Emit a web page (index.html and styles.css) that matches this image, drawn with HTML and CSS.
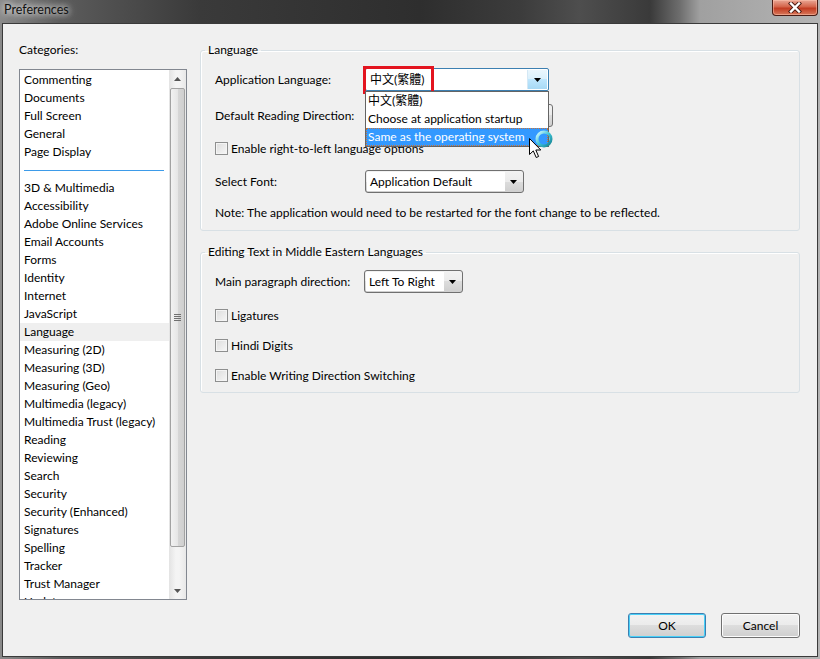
FILE: index.html
```html
<!DOCTYPE html>
<html lang="en">
  <head>
    <meta charset="UTF-8" />
    <title>Preferences</title>
    <link rel="stylesheet" href="styles.css">
  </head>
  <body>
    <div class="titlebar">
      <span class="title">Preferences</span>
      <div class="close-btn">
        <svg width="18" height="11" viewBox="0 0 18 11">
          <path d="M5 1.5 L13 9.5 M13 1.5 L5 9.5" stroke="#4a1a12" stroke-width="4.2" stroke-linecap="square" />
          <path d="M5 1.5 L13 9.5 M13 1.5 L5 9.5" stroke="#ffffff" stroke-width="2.4" stroke-linecap="square" />
        </svg>
      </div>
    </div>

    <div class="window">
      <div class="content">
        <!-- left: categories -->
        <div class="categories">
          <div class="cat-label">Categories:</div>
          <div class="listbox">
            <ul class="items">
              <li>Commenting</li>
              <li>Documents</li>
              <li>Full Screen</li>
              <li>General</li>
              <li>Page Display</li>
              <li class="sep"><span></span></li>
              <li>3D &amp; Multimedia</li>
              <li>Accessibility</li>
              <li>Adobe Online Services</li>
              <li>Email Accounts</li>
              <li>Forms</li>
              <li>Identity</li>
              <li>Internet</li>
              <li>JavaScript</li>
              <li class="selected">Language</li>
              <li>Measuring (2D)</li>
              <li>Measuring (3D)</li>
              <li>Measuring (Geo)</li>
              <li>Multimedia (legacy)</li>
              <li>Multimedia Trust (legacy)</li>
              <li>Reading</li>
              <li>Reviewing</li>
              <li>Search</li>
              <li>Security</li>
              <li>Security (Enhanced)</li>
              <li>Signatures</li>
              <li>Spelling</li>
              <li>Tracker</li>
              <li>Trust Manager</li>
              <li>Updater</li>
            </ul>
            <div class="scrollbar">
              <div class="sb-arrow">
                <svg width="7" height="4" viewBox="0 0 7 4"><path d="M0 4 L3.5 0 L7 4 Z" fill="#555" /></svg>
              </div>
              <div class="sb-track">
                <div class="sb-thumb">
                  <div class="grip"><span></span><span></span><span></span><span></span></div>
                </div>
              </div>
              <div class="sb-arrow">
                <svg width="7" height="4" viewBox="0 0 7 4"><path d="M0 0 L3.5 4 L7 0 Z" fill="#555" /></svg>
              </div>
            </div>
          </div>
        </div>

        <!-- right: settings -->
        <div class="settings">
          <fieldset class="group">
            <legend>Language</legend>
            <div class="group-body">
              <div class="row">
                <span class="label">Application Language:</span>
                <div class="combo open">
                  <div class="value cjk">中文(繁體)</div>
                  <div class="drop-btn">
                    <svg width="7" height="4" viewBox="0 0 7 4"><path d="M0 0 L3.5 4 L7 0 Z" fill="#000" /></svg>
                  </div>
                  <div class="highlight"></div>
                  <ul class="popup">
                    <li class="cjk">中文(繁體)</li>
                    <li>Choose at application startup</li>
                    <li class="active">Same as the operating system</li>
                  </ul>
                  <svg class="cursor" width="30" height="34" viewBox="0 0 30 34">
                    <defs>
                      <linearGradient id="ring" x1="0" y1="0" x2="1" y2="1">
                        <stop offset="0" stop-color="#d8fbff" />
                        <stop offset="0.5" stop-color="#3ec3d6" />
                        <stop offset="1" stop-color="#13808f" />
                      </linearGradient>
                    </defs>
                    <circle cx="19" cy="11" r="7" fill="none" stroke="url(#ring)" stroke-width="3" />
                    <path d="M4.5 10.5 L4.5 26.5 L8.3 22.9 L11.2 29.5 L13.6 28.5 L10.8 22 L15.8 22 Z" fill="#fff" stroke="#000" stroke-width="1" stroke-linejoin="round" />
                  </svg>
                </div>
              </div>
              <div class="row gap13">
                <span class="label">Default Reading Direction:</span>
                <div class="select wide">
                  <div class="value"></div>
                  <div class="arrow">
                    <svg width="7" height="4" viewBox="0 0 7 4"><path d="M0 0 L3.5 4 L7 0 Z" fill="#000" /></svg>
                  </div>
                </div>
              </div>
              <label class="check gap12"><span class="box"></span>Enable right-to-left language options</label>
              <div class="row gap13">
                <span class="label">Select Font:</span>
                <div class="select font">
                  <div class="value">Application Default</div>
                  <div class="arrow">
                    <svg width="7" height="4" viewBox="0 0 7 4"><path d="M0 0 L3.5 4 L7 0 Z" fill="#000" /></svg>
                  </div>
                </div>
              </div>
              <p class="note">Note: The application would need to be restarted for the font change to be reflected.</p>
            </div>
          </fieldset>

          <fieldset class="group second">
            <legend>Editing Text in Middle Eastern Languages</legend>
            <div class="group-body">
              <div class="row">
                <span class="label">Main paragraph direction:</span>
                <div class="select dir">
                  <div class="value">Left To Right</div>
                  <div class="arrow">
                    <svg width="7" height="4" viewBox="0 0 7 4"><path d="M0 0 L3.5 4 L7 0 Z" fill="#000" /></svg>
                  </div>
                </div>
              </div>
              <label class="check gap13"><span class="box"></span>Ligatures</label>
              <label class="check gap12"><span class="box"></span>Hindi Digits</label>
              <label class="check gap12"><span class="box"></span>Enable Writing Direction Switching</label>
            </div>
          </fieldset>
        </div>
      </div>

      <div class="footer">
        <button class="btn default">OK</button>
        <button class="btn cancel">Cancel</button>
      </div>
    </div>
  </body>
</html>
```

FILE: styles.css
```css
* {
  box-sizing: border-box;
}
body {
  margin: 0;
  width: 820px;
  height: 659px;
  overflow: hidden;
  font-family: Lato, "Noto Sans", sans-serif;
  font-size: 12px;
  color: #000;
  background: linear-gradient(90deg, #8a8a8a 0px, #5c5c5c 60px, #3a3a3a 200px, #2e2e2e 420px, #3c3c3c 520px, #4e4e4e 580px, #3a3a3a 650px, #6e6e6e 680px, #a0a0a0 700px, #b4b4b4 820px);
}
.cjk {
  font-family: Lato, "Noto Sans CJK TC", sans-serif;
}
.titlebar {
  display: flex;
  align-items: flex-start;
  height: 23px;
}
.title {
  padding: 2px 0 0 4px;
  line-height: 16px;
  font-size: 12.5px;
  color: #111;
  text-shadow: 0 0 6px #fff, 0 0 10px rgba(255, 255, 255, 0.8);
}
.close-btn {
  margin-left: auto;
  margin-right: 2px;
  width: 46px;
  height: 16px;
  display: flex;
  align-items: center;
  justify-content: center;
  border: 1px solid #4a1c14;
  border-top: none;
  border-radius: 0 0 4px 4px;
  background: linear-gradient(#e9a795, #d4644a 45%, #c23c22 55%, #d8785a);
  box-shadow: inset 0 0 0 1px rgba(255, 200, 180, 0.5);
}
.window {
  margin: 0 2px;
  height: 634px;
  border: 1px solid #3a3a3a;
  background-color: #f0f0f0;
  padding: 18px 16px 0 16px;
}
.content {
  display: grid;
  grid-template-columns: 168px 600px;
  column-gap: 13px;
  height: 558px;
}
.cat-label {
  line-height: 16px;
  margin-bottom: 11px;
}
.listbox {
  display: flex;
  height: 531px;
  border: 1px solid #828790;
  background-color: #fff;
  overflow: hidden;
}
.items {
  flex: 1;
  list-style: none;
  margin: 0;
  padding: 1px 0 0 0;
  overflow: hidden;
}
.items li {
  height: 18px;
  line-height: 18px;
  padding-left: 4px;
  white-space: nowrap;
}
.items li.selected {
  background-color: #efefef;
}
.items li.sep {
  display: flex;
  align-items: center;
}
.items li.sep span {
  display: block;
  width: 140px;
  height: 1px;
  background-color: #3d9be9;
}
.scrollbar {
  width: 17px;
  display: flex;
  flex-direction: column;
  background: linear-gradient(90deg, #e3e3e3, #f4f4f4 40%, #f4f4f4 60%, #e8e8e8);
}
.sb-arrow {
  height: 17px;
  display: flex;
  align-items: center;
  justify-content: center;
}
.sb-track {
  flex: 1;
  padding: 1px 0 0 0;
}
.sb-thumb {
  height: 459px;
  margin: 0 1px;
  border: 1px solid #a2a2a2;
  border-radius: 2px;
  background: linear-gradient(90deg, #f2f2f2, #e6e6e6 50%, #d6d6d6 55%, #cfcfcf);
  display: flex;
  align-items: center;
  justify-content: center;
}
.grip {
  display: flex;
  flex-direction: column;
  gap: 1px;
}
.grip span {
  display: block;
  width: 7px;
  height: 1px;
  background-color: #707070;
}
.group {
  margin: 0;
  padding: 0 14px 9px 4px;
  border: 1px solid #d8e0e5;
  border-radius: 3px;
  box-shadow: inset 1px 1px 0 #fff;
}
.group.second {
  margin-top: 13px;
  padding-bottom: 8px;
}
.group legend {
  padding: 0 3px;
  line-height: 16px;
}
.group-body {
  padding: 10px 0 0 10px;
}
.row {
  display: flex;
  align-items: center;
  height: 23px;
}
.label {
  width: 150px;
  flex-shrink: 0;
}
.gap12 {
  margin-top: 12px;
}
.gap13 {
  margin-top: 13px;
}
.combo {
  position: relative;
  display: flex;
  width: 184px;
  height: 23px;
  border: 1px solid #3c7fb1;
  border-radius: 2px;
  background-color: #fff;
  padding: 1px;
}
.combo .value {
  flex: 1;
  line-height: 19px;
  padding-left: 3px;
}
.combo .drop-btn {
  width: 20px;
  display: flex;
  align-items: center;
  justify-content: center;
  background: linear-gradient(#eaf6fd, #d9f0fc 50%, #bee6fd 50%, #a7d9f5);
  border-left: 1px solid #d4e8f5;
}
.combo .highlight {
  position: absolute;
  left: -3px;
  top: -3px;
  width: 71px;
  height: 28px;
  border: 3px solid #e3141f;
}
.popup {
  position: absolute;
  left: -1px;
  top: 22px;
  width: 184px;
  margin: 0;
  padding: 0;
  list-style: none;
  background-color: #fff;
  border: 1px solid #646464;
  z-index: 2;
}
.popup li {
  height: 18px;
  line-height: 18px;
  padding-left: 2px;
  white-space: nowrap;
}
.popup li.active {
  background-color: #3399ff;
  color: #fff;
  border: 1px dotted #c8733a;
  padding-left: 1px;
  line-height: 16px;
}
.cursor {
  position: absolute;
  left: 159px;
  top: 59px;
  z-index: 3;
}
.select {
  display: flex;
  height: 23px;
  border: 1px solid #707070;
  border-radius: 3px;
  padding: 1px;
  background: linear-gradient(#f2f2f2, #ebebeb 50%, #dddddd 50%, #cfcfcf);
}
.select .value {
  flex: 1;
  background-color: #fff;
  line-height: 19px;
  padding-left: 3px;
  white-space: nowrap;
  overflow: hidden;
}
.select .arrow {
  width: 17px;
  display: flex;
  align-items: center;
  justify-content: center;
}
.select.wide {
  width: 188px;
}
.select.font {
  width: 159px;
}
.select.dir {
  width: 99px;
  margin-left: -1px;
}
.check {
  display: flex;
  align-items: center;
  height: 18px;
}
.check .box {
  width: 13px;
  height: 13px;
  margin-right: 3px;
  border: 1px solid #8e8f8f;
  background: linear-gradient(135deg, #dcdcdc, #f7f7f7);
  box-shadow: inset 0 0 0 1px #f4f4f4;
}
.note {
  margin: 12px 0 0 0;
  line-height: 16px;
  white-space: nowrap;
}
.footer {
  display: flex;
  justify-content: flex-end;
  gap: 15px;
  margin-top: 13px;
  padding-right: 1px;
}
.btn {
  width: 78px;
  height: 25px;
  font-family: inherit;
  font-size: 12px;
  color: #000;
  border: 1px solid #707070;
  border-radius: 3px;
  background: linear-gradient(#f2f2f2, #ebebeb 50%, #dddddd 50%, #cfcfcf);
  box-shadow: inset 0 0 0 1px #fcfcfc;
}
.btn.cancel {
  width: 79px;
}
.btn.default {
  border-color: #3c7fb1;
  box-shadow: inset 0 0 0 1px #48d0f8;
}
```
